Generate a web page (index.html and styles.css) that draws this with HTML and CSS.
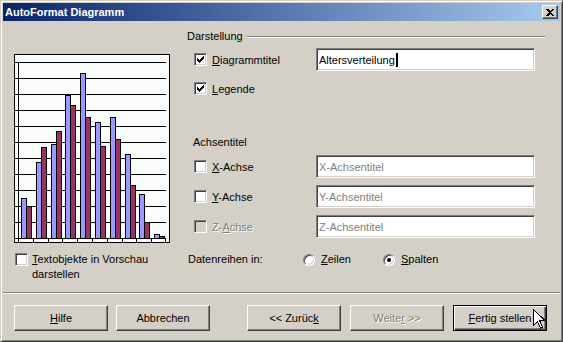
FILE: index.html
```html
<!DOCTYPE html>
<html lang="de">
<head>
    <meta charset="UTF-8">
    <title>AutoFormat Diagramm</title>
    <link rel="stylesheet" href="styles.css">
</head>
<body>
    <div class="window">
        <div class="titlebar">
            <span class="title">AutoFormat Diagramm</span>
            <span class="close">
                <svg width="8" height="7" viewBox="0 0 8 7" shape-rendering="crispEdges">
                    <path d="M0 0h2l2 2l2-2h2l-3 3.5l3 3.5h-2l-2-2l-2 2h-2l3-3.5z" fill="#000"/>
                </svg>
            </span>
        </div>

        <div class="main">
            <!-- chart preview -->
            <div class="preview">
                <svg class="chart" width="156" height="189" viewBox="0 0 156 189" shape-rendering="crispEdges">
                    <rect x="0.5" y="0.5" width="155" height="188" fill="#fafdfa" stroke="#000"/>
                    <g stroke="#000">
                        <path d="M1 8.5h151M1 24.5h151M1 40.5h151M1 56.5h151M1 72.5h151M1 88.5h151M1 104.5h151M1 120.5h151M1 136.5h151M1 152.5h151M1 168.5h151M1 184.5h151"/>
                        <path d="M4.5 8v180M19.5 184v4M34.5 184v4M48.5 184v4M63.5 184v4M78.5 184v4M93.5 184v4M108.5 184v4M122.5 184v4M137.5 184v4M151.5 184v4"/>
                    </g>
                    <g stroke="#000" fill="#9999ff">
                        <rect x="7.5" y="144.5" width="5" height="40"/>
                        <rect x="22.5" y="108.5" width="5" height="76"/>
                        <rect x="37.5" y="90.5" width="5" height="94"/>
                        <rect x="51.5" y="41.5" width="5" height="143"/>
                        <rect x="66.5" y="19.5" width="5" height="165"/>
                        <rect x="81.5" y="68.5" width="5" height="116"/>
                        <rect x="96.5" y="63.5" width="5" height="121"/>
                        <rect x="111.5" y="100.5" width="5" height="84"/>
                        <rect x="125.5" y="140.5" width="5" height="44"/>
                        <rect x="140.5" y="180.5" width="5" height="4"/>
                    </g>
                    <g stroke="#000" fill="#993366">
                        <rect x="12.5" y="152.5" width="5" height="32"/>
                        <rect x="27.5" y="93.5" width="5" height="91"/>
                        <rect x="42.5" y="77.5" width="5" height="107"/>
                        <rect x="56.5" y="51.5" width="5" height="133"/>
                        <rect x="71.5" y="63.5" width="5" height="121"/>
                        <rect x="86.5" y="92.5" width="5" height="92"/>
                        <rect x="101.5" y="85.5" width="5" height="99"/>
                        <rect x="116.5" y="131.5" width="5" height="53"/>
                        <rect x="130.5" y="168.5" width="5" height="16"/>
                        <rect x="145.5" y="182.5" width="5" height="2"/>
                    </g>
                </svg>
                <div class="preview-text">
                    <span class="check"></span>
                    <span><u>T</u>extobjekte in Vorschau darstellen</span>
                </div>
            </div>

            <!-- options -->
            <div class="options">
                <div class="group-head"><span>Darstellung</span><span class="rule"></span></div>

                <div class="row r1">
                    <span class="check"><svg width="7" height="7" viewBox="0 0 7 7" shape-rendering="crispEdges"><path d="M6 0h1v3h-1v1h-1v1h-1v1h-1v1h-1v-1h-1v-1h-1v-3h1v1h1v1h1v-1h1v-1h1z" fill="#000"/></svg></span>
                    <span class="lbl"><u>D</u>iagrammtitel</span>
                    <div class="field"><span>Altersverteilung</span><span class="caret"></span></div>
                </div>
                <div class="row r2">
                    <span class="check"><svg width="7" height="7" viewBox="0 0 7 7" shape-rendering="crispEdges"><path d="M6 0h1v3h-1v1h-1v1h-1v1h-1v1h-1v-1h-1v-1h-1v-3h1v1h1v1h1v-1h1v-1h1z" fill="#000"/></svg></span>
                    <span class="lbl"><u>L</u>egende</span>
                </div>

                <div class="sub-head">Achsentitel</div>

                <div class="row rx">
                    <span class="check"></span>
                    <span class="lbl"><u>X</u>-Achse</span>
                    <div class="field off">X-Achsentitel</div>
                </div>
                <div class="row ry">
                    <span class="check"></span>
                    <span class="lbl"><u>Y</u>-Achse</span>
                    <div class="field off">Y-Achsentitel</div>
                </div>
                <div class="row rz">
                    <span class="check disabled"></span>
                    <span class="lbl dim">Z-<u>A</u>chse</span>
                    <div class="field off">Z-Achsentitel</div>
                </div>

                <div class="series">
                    <span class="series-lbl">Datenreihen in:</span>
                    <span class="option"><span class="radio"></span><span><u>Z</u>eilen</span></span>
                    <span class="option"><span class="radio on"></span><span><u>S</u>palten</span></span>
                </div>
            </div>
        </div>

        <div class="separator"></div>

        <div class="buttons">
            <span class="btn"><span><u>H</u>ilfe</span></span>
            <span class="btn cancel"><span>Abbrechen</span></span>
            <span class="btn back"><span>&lt;&lt; Zurüc<u>k</u></span></span>
            <span class="btn next dim"><span>Weite<u>r</u> &gt;&gt;</span></span>
            <span class="btn finish default"><span><u>F</u>ertig stellen</span></span>
        </div>

        <svg class="cursor" width="12" height="20" viewBox="0 0 12 20" shape-rendering="crispEdges">
            <path d="M0.5 0.5v16l4-4l3 6.5l2-1l-3-6.5h5.5z" fill="#fff" stroke="#000"/>
        </svg>
    </div>
</body>
</html>
```

FILE: styles.css
```css
body {
    margin: 0;
    font-family: "Liberation Sans", Arial, sans-serif;
    font-size: 11px;
    color: #000;
    background-color: #d4d0c8;
}

.window {
    position: relative;
    box-sizing: border-box;
    width: 563px;
    height: 342px;
    padding: 2px;
    background-color: #d4d0c8;
    border: 1px solid;
    border-color: #d4d0c8 #404040 #404040 #d4d0c8;
    box-shadow: inset 1px 1px #fff, inset -1px -1px #808080;
}

/* Title bar */
.titlebar {
    display: flex;
    align-items: center;
    height: 18px;
    padding-left: 2px;
    background: linear-gradient(to right, #0a246a, #a6caf0);
}

.title {
    flex: 1;
    color: #fff;
    font-weight: bold;
    font-size: 11px;
}

.close {
    display: flex;
    align-items: center;
    justify-content: center;
    box-sizing: border-box;
    width: 16px;
    height: 14px;
    margin-right: 2px;
    background-color: #d4d0c8;
    border: 1px solid;
    border-color: #fff #404040 #404040 #fff;
    box-shadow: inset -1px -1px #808080;
}

/* Main area */
.main {
    display: flex;
    height: 271px;
}

.preview {
    width: 156px;
    margin: 33px 0 0 11px;
}

.chart {
    display: block;
}

.preview-text {
    display: flex;
    align-items: flex-start;
    margin-top: 9px;
    padding-left: 1px;
    line-height: 15px;
}

.preview-text .check {
    flex: none;
    margin: 1px 4px 0 0;
}

.options {
    width: 358px;
    margin-left: 17px;
    padding-top: 9px;
}

.group-head {
    display: flex;
    line-height: 13px;
}

.rule {
    flex: 1;
    height: 0;
    margin: 6px 0 0 4px;
    border-top: 1px solid #808080;
    border-bottom: 1px solid #fff;
}

.sub-head {
    line-height: 13px;
    margin-top: 36px;
    padding-left: 6px;
}

.row {
    display: flex;
    align-items: center;
    height: 23px;
    padding-left: 7px;
}

.r1 { margin-top: 5px; }
.r2 { margin-top: 6px; }
.rx { margin-top: 6px; }
.ry, .rz { margin-top: 7px; }

.check {
    display: flex;
    align-items: center;
    justify-content: center;
    box-sizing: border-box;
    width: 13px;
    height: 13px;
    background-color: #fff;
    border: 1px solid;
    border-color: #808080 #fff #fff #808080;
    box-shadow: inset 1px 1px #404040, inset -1px -1px #d4d0c8;
}

.check.disabled {
    background-color: #d4d0c8;
}

.lbl {
    width: 104px;
    margin-left: 5px;
}

.dim {
    color: #808080;
    text-shadow: 1px 1px #fff;
}

.field {
    display: flex;
    align-items: center;
    box-sizing: border-box;
    width: 219px;
    height: 23px;
    padding-left: 2px;
    background-color: #fff;
    border: 1px solid;
    border-color: #808080 #fff #fff #808080;
    box-shadow: inset 1px 1px #404040, inset -1px -1px #d4d0c8;
}

.field.off {
    color: #808080;
}

.caret {
    display: inline-block;
    width: 2px;
    height: 14px;
    margin-left: 1px;
    background-color: #000;
}

.series {
    display: flex;
    align-items: center;
    margin-top: 14px;
    padding-left: 1px;
    line-height: 15px;
}

.series-lbl {
    width: 115px;
}

.option {
    display: flex;
    align-items: center;
    width: 80px;
}

.radio {
    display: flex;
    align-items: center;
    justify-content: center;
    box-sizing: border-box;
    width: 12px;
    height: 12px;
    margin-right: 6px;
    border-radius: 50%;
    background-color: #fff;
    border: 1px solid;
    border-color: #808080 #fff #fff #808080;
    box-shadow: inset 1px 1px #404040, inset -1px -1px #d4d0c8;
}

.radio.on::after {
    content: "";
    width: 4px;
    height: 4px;
    border-radius: 50%;
    background-color: #000;
}

/* Bottom */
.separator {
    height: 0;
    border-top: 1px solid #808080;
    border-bottom: 1px solid #fff;
}

.buttons {
    display: flex;
    margin-top: 11px;
    padding-left: 11px;
}

.btn {
    display: flex;
    align-items: center;
    justify-content: center;
    box-sizing: border-box;
    width: 94px;
    height: 26px;
    background-color: #d4d0c8;
    border: 1px solid;
    border-color: #fff #404040 #404040 #fff;
    box-shadow: inset -1px -1px #808080;
}

.cancel { margin-left: 8px; }
.back { margin-left: 37px; }
.next, .finish { margin-left: 9px; }

.btn.default {
    border-color: #000;
    box-shadow: inset 1px 1px #fff, inset -1px -1px #404040, inset -2px -2px #808080;
}

.cursor {
    position: absolute;
    left: 532px;
    top: 308px;
}
```
